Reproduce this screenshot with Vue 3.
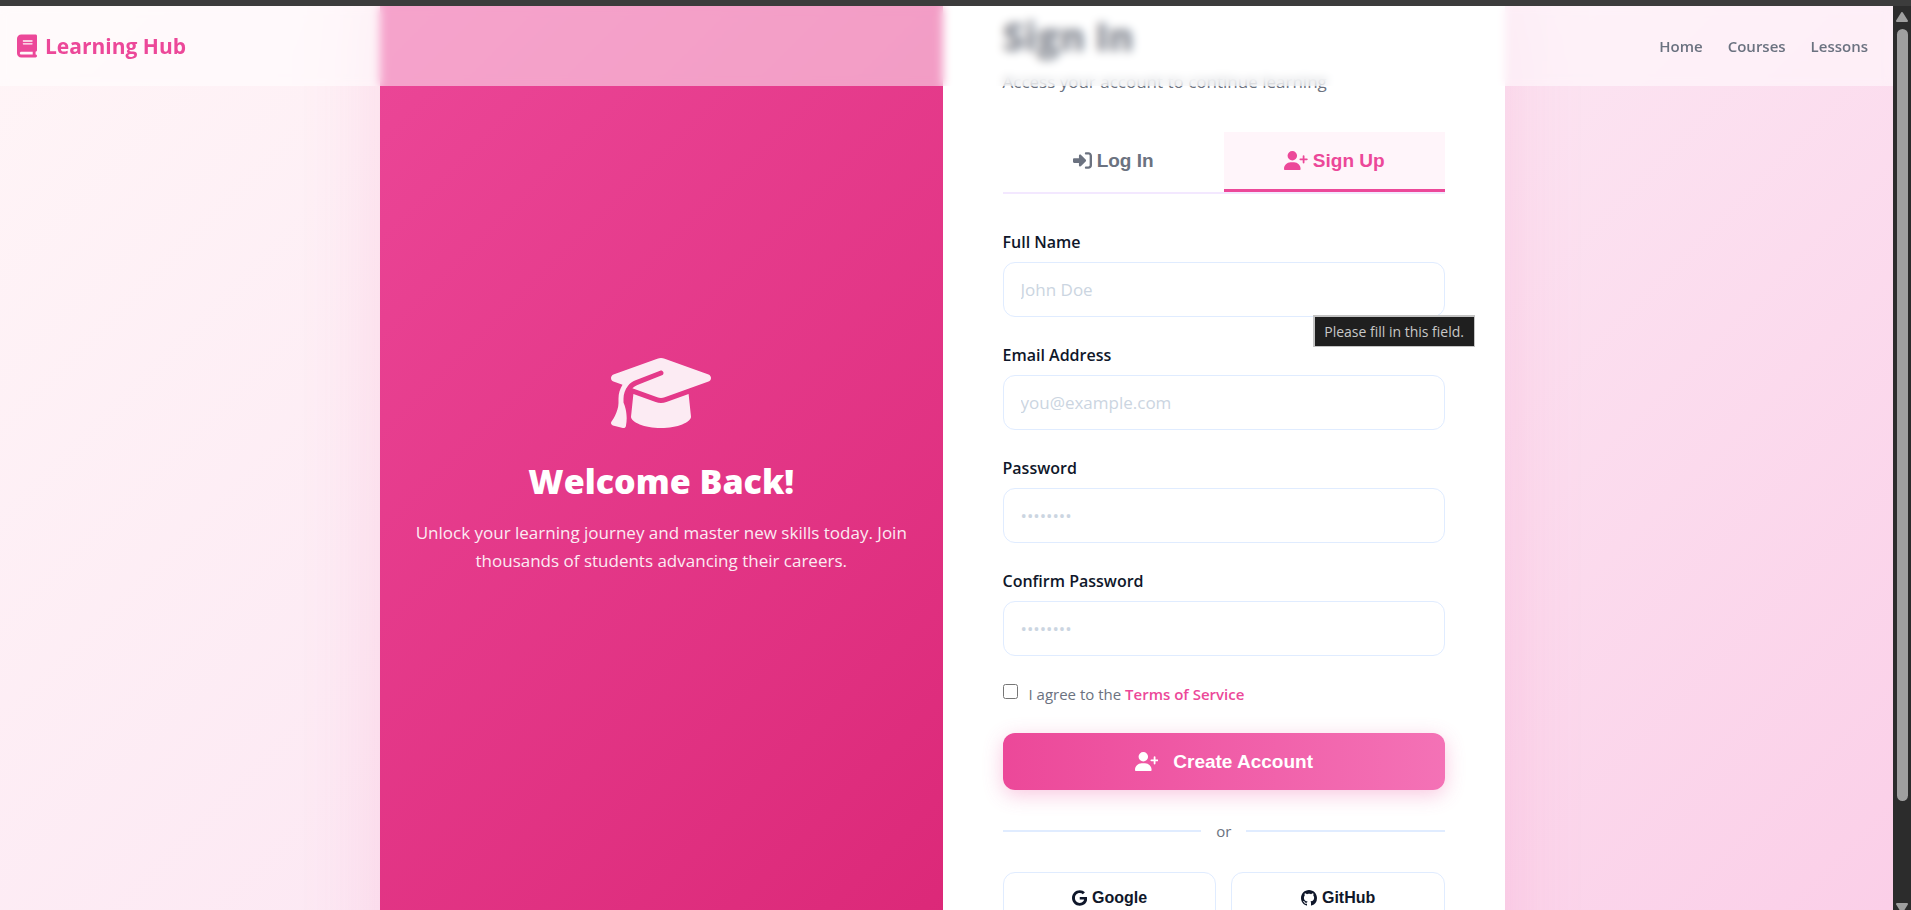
<script setup>
import { ref, reactive } from 'vue';

const activeTab = ref('signup');

const form = reactive({
  name: '',
  email: '',
  password: '',
  confirm: '',
  agree: false
});

const navLinks = ['Home', 'Courses', 'Lessons'];

const fields = [
  { key: 'name', label: 'Full Name', type: 'text', placeholder: 'John Doe' },
  { key: 'email', label: 'Email Address', type: 'email', placeholder: 'you@example.com' },
  { key: 'password', label: 'Password', type: 'password', placeholder: '••••••••' },
  { key: 'confirm', label: 'Confirm Password', type: 'password', placeholder: '••••••••' }
];

const userPlus =
  'M96 128a128 128 0 1 1 256 0A128 128 0 1 1 96 128zM0 482.3C0 383.8 79.8 304 178.3 304h91.4C368.2 304 448 383.8 448 482.3c0 16.4-13.3 29.7-29.7 29.7H29.7C13.3 512 0 498.7 0 482.3zM504 312V248H440c-13.3 0-24-10.7-24-24s10.7-24 24-24h64V136c0-13.3 10.7-24 24-24s24 10.7 24 24v64h64c13.3 0 24 10.7 24 24s-10.7 24-24 24H552v64c0 13.3-10.7 24-24 24s-24-10.7-24-24z';
</script>

<template>
  <div class="window">
    <div class="window-edge"></div>
    <div class="viewport">
      <div class="page">
        <header class="navbar">
          <a href="#" class="logo">
            <svg class="logo-icon" viewBox="0 0 448 512" fill="currentColor" aria-hidden="true">
              <path d="M96 0C43 0 0 43 0 96V416c0 53 43 96 96 96H384h32c17.7 0 32-14.3 32-32s-14.3-32-32-32V384c17.7 0 32-14.3 32-32V32c0-17.7-14.3-32-32-32H384 96zm0 384H352v64H96c-17.7 0-32-14.3-32-32s14.3-32 32-32zm32-240c0-8.8 7.2-16 16-16H336c8.8 0 16 7.2 16 16s-7.2 16-16 16H144c-8.8 0-16-7.2-16-16zm16 48H336c8.8 0 16 7.2 16 16s-7.2 16-16 16H144c-8.8 0-16-7.2-16-16s7.2-16 16-16z" />
            </svg>
            <span>Learning Hub</span>
          </a>
          <nav class="nav-links">
            <a v-for="link in navLinks" :key="link" href="#">{{ link }}</a>
          </nav>
        </header>

        <main class="auth-card">
          <section class="welcome">
            <svg class="cap-icon" viewBox="0 0 640 512" fill="currentColor" aria-hidden="true">
              <path d="M320 32c-8.1 0-16.1 1.4-23.7 4.1L15.8 137.4C6.3 140.9 0 149.9 0 160s6.3 19.1 15.8 22.6l57.9 20.9C57.3 229.3 48 259.8 48 291.9v28.1c0 28.4-10.8 57.7-22.3 80.8c-6.5 13-13.9 25.8-22.5 37.6C0 442.7-.9 448.3 .9 453.4s6 8.9 11.2 10.2l64 16c4.2 1.1 8.7 .3 12.4-2s6.3-6.1 7.1-10.4c8.6-42.8 4.3-81.2-2.1-108.7C90.3 344.3 86 329.8 80 316.5V291.9c0-30.2 10.2-58.7 27.9-81.5c12.9-15.5 29.6-28 49.2-35.7l157-61.7c8.2-3.2 17.5 .8 20.7 9s-.8 17.5-9 20.7l-157 61.7c-12.4 4.9-23.3 12.4-32.2 21.6l159.6 57.6c7.6 2.7 15.6 4.1 23.7 4.1s16.1-1.4 23.7-4.1L624.2 182.6c9.5-3.4 15.8-12.5 15.8-22.6s-6.3-19.1-15.8-22.6L343.7 36.1C336.1 33.4 328.1 32 320 32zM128 408c0 35.3 86 72 192 72s192-36.7 192-72L496.7 262.6 354.5 314c-11.1 4-22.8 6-34.5 6s-23.5-2-34.5-6L143.3 262.6 128 408z" />
            </svg>
            <h2>Welcome Back!</h2>
            <p>Unlock your learning journey and master new skills today. Join thousands of students advancing their careers.</p>
          </section>

          <section class="form-panel">
            <h1>Sign In</h1>
            <p class="subtitle">Access your account to continue learning</p>

            <div class="tabs">
              <button type="button" :class="['tab', { active: activeTab === 'login' }]" @click="activeTab = 'login'">
                <svg class="tab-icon" viewBox="0 0 512 512" fill="currentColor" aria-hidden="true">
                  <path d="M217.9 105.9L340.7 228.7c7.2 7.2 11.3 17.1 11.3 27.3s-4.1 20.1-11.3 27.3L217.9 406.1c-6.4 6.4-15 9.9-24 9.9c-18.7 0-33.9-15.2-33.9-33.9l0-62.1L32 320c-17.7 0-32-14.3-32-32l0-64c0-17.7 14.3-32 32-32l128 0 0-62.1c0-18.7 15.2-33.9 33.9-33.9c9 0 17.6 3.6 24 9.9zM352 416l64 0c17.7 0 32-14.3 32-32l0-256c0-17.7-14.3-32-32-32l-64 0c-17.7 0-32-14.3-32-32s14.3-32 32-32l64 0c53 0 96 43 96 96l0 256c0 53-43 96-96 96l-64 0c-17.7 0-32-14.3-32-32s14.3-32 32-32z" />
                </svg>
                Log In
              </button>
              <button type="button" :class="['tab', { active: activeTab === 'signup' }]" @click="activeTab = 'signup'">
                <svg class="tab-icon" viewBox="0 0 640 512" fill="currentColor" aria-hidden="true">
                  <path :d="userPlus" />
                </svg>
                Sign Up
              </button>
            </div>

            <form @submit.prevent>
              <div v-for="field in fields" :key="field.key" class="form-group">
                <label :for="field.key">{{ field.label }}</label>
                <input :id="field.key" v-model="form[field.key]" :type="field.type" :placeholder="field.placeholder" required />
                <span v-if="field.key === 'name'" class="tooltip" role="tooltip">Please fill in this field.</span>
              </div>

              <div class="terms">
                <input id="agree" v-model="form.agree" type="checkbox" />
                <label for="agree">I agree to the <a href="#">Terms of Service</a></label>
              </div>

              <button type="submit" class="submit-btn">
                <svg class="tab-icon" viewBox="0 0 640 512" fill="currentColor" aria-hidden="true">
                  <path :d="userPlus" />
                </svg>
                Create Account
              </button>
            </form>

            <div class="divider"><span>or</span></div>

            <div class="social">
              <button type="button">
                <svg viewBox="0 0 488 512" fill="currentColor" aria-hidden="true">
                  <path d="M488 261.8C488 403.3 391.1 504 248 504 110.8 504 0 393.2 0 256S110.8 8 248 8c66.8 0 123 24.5 166.3 64.9l-67.5 64.9C258.5 52.6 94.3 116.6 94.3 256c0 86.5 69.1 156.6 153.7 156.6 98.2 0 135-70.4 140.8-106.9H248v-85.3h236.1c2.3 12.7 3.9 24.9 3.9 41.4z" />
                </svg>
                Google
              </button>
              <button type="button">
                <svg viewBox="0 0 16 16" fill="currentColor" aria-hidden="true">
                  <path d="M8 0C3.58 0 0 3.58 0 8c0 3.54 2.29 6.53 5.47 7.59.4.07.55-.17.55-.38 0-.19-.01-.82-.01-1.49-2.01.37-2.53-.49-2.69-.94-.09-.23-.48-.94-.82-1.13-.28-.15-.68-.52-.01-.53.63-.01 1.08.58 1.23.82.72 1.21 1.87.87 2.33.66.07-.52.28-.87.51-1.07-1.78-.2-3.64-.89-3.64-3.95 0-.87.31-1.59.82-2.15-.08-.2-.36-1.02.08-2.12 0 0 .67-.21 2.2.82.64-.18 1.32-.27 2-.27s1.36.09 2 .27c1.53-1.04 2.2-.82 2.2-.82.44 1.1.16 1.92.08 2.12.51.56.82 1.27.82 2.15 0 3.07-1.87 3.75-3.65 3.95.29.25.54.73.54 1.48 0 1.07-.01 1.93-.01 2.2 0 .21.15.46.55.38A8.01 8.01 0 0 0 16 8c0-4.42-3.58-8-8-8z" />
                </svg>
                GitHub
              </button>
            </div>
          </section>
        </main>
      </div>

      <div class="scrollbar" aria-hidden="true">
        <svg class="arrow" viewBox="0 0 12 10"><path d="M6 1 L11 9 H1 Z" /></svg>
        <div class="track"><div class="thumb"></div></div>
        <svg class="arrow" viewBox="0 0 12 10"><path d="M6 9 L1 1 H11 Z" /></svg>
      </div>
    </div>
  </div>
</template>

<style>
body {
  margin: 0;
  overflow: hidden;
}
</style>

<style scoped>
* {
  box-sizing: border-box;
}

.window {
  display: flex;
  flex-direction: column;
  height: 100vh;
  overflow: hidden;
  background: #3c3c3c;
  font-family: "Open Sans", "Noto Sans", sans-serif;
  color: #0f172a;
}

.window-edge {
  flex: none;
  height: 6px;
}

.viewport {
  flex: 1;
  display: flex;
  min-height: 0;
}

.page {
  position: relative;
  flex: 1;
  display: flex;
  align-items: center;
  justify-content: center;
  min-width: 0;
  padding: 12px 8px 0 0;
  overflow: hidden;
  background: linear-gradient(135deg, #fff5f7 0%, #fce7f3 50%, #fbcfe8 100%);
}

.navbar {
  position: absolute;
  top: 0;
  left: 0;
  right: 0;
  z-index: 10;
  display: flex;
  align-items: center;
  justify-content: space-between;
  height: 80px;
  padding: 0 25px 0 17px;
  background: rgba(255, 255, 255, 0.5);
  backdrop-filter: blur(5px);
}

.logo {
  display: flex;
  align-items: center;
  gap: 8px;
  font-size: 21px;
  font-weight: 700;
  color: #ec4899;
  text-decoration: none;
}

.logo-icon {
  width: 20px;
  height: 24px;
}

.nav-links {
  display: flex;
  gap: 25px;
}

.nav-links a {
  font-size: 15px;
  font-weight: 600;
  color: #6b7280;
  text-decoration: none;
}

.auth-card {
  flex: none;
  display: grid;
  grid-template-columns: 1fr 1fr;
  width: 100%;
  max-width: 1125px;
  background: #fff;
  box-shadow: 0 25px 75px rgba(236, 72, 153, 0.15);
}

.welcome {
  display: flex;
  flex-direction: column;
  align-items: center;
  justify-content: center;
  padding: 30px;
  background: linear-gradient(135deg, #ec4899 0%, #db2777 100%);
  color: #fff;
  text-align: center;
}

.cap-icon {
  width: 100px;
  height: 80px;
  opacity: 0.9;
}

.welcome h2 {
  margin: 24px 0 14px;
  font-size: 34px;
  font-weight: 800;
  line-height: 48px;
}

.welcome p {
  margin: 0;
  font-size: 17px;
  line-height: 28px;
  opacity: 0.9;
}

.form-panel {
  padding: 60px;
}

h1 {
  margin: 0;
  font-size: 38px;
  font-weight: 800;
  line-height: 64px;
}

.subtitle {
  margin: 2px 0 38px;
  font-size: 17px;
  line-height: 24px;
  color: #6b7280;
}

.tabs {
  display: flex;
  margin-bottom: 36px;
  border-bottom: 2px solid #f3e8ff;
}

.tab {
  flex: 1;
  display: flex;
  align-items: center;
  justify-content: center;
  gap: 5px;
  height: 60px;
  padding: 0;
  border: none;
  border-bottom: 3px solid transparent;
  background: none;
  font-family: "Liberation Sans", Arial, sans-serif;
  font-size: 19px;
  font-weight: 600;
  color: #6b7280;
  cursor: pointer;
}

.tab.active {
  border-bottom-color: #ec4899;
  background: #fff5fa;
  color: #ec4899;
}

.tab-icon {
  height: 19px;
}

.form-group {
  position: relative;
  margin-bottom: 26px;
}

.form-group label {
  display: block;
  margin-bottom: 8px;
  font-size: 16px;
  font-weight: 600;
  line-height: 24px;
}

.form-group input {
  display: block;
  width: 100%;
  height: 55px;
  padding: 0 17px;
  border: 1px solid #e0ecff;
  border-radius: 12px;
  background: #fff;
  font-family: inherit;
  font-size: 17px;
  color: #0f172a;
  outline: none;
}

.form-group input::placeholder {
  color: #cbd5e1;
  opacity: 1;
}

.form-group input:focus {
  border-color: #ec4899;
}

.tooltip {
  position: absolute;
  top: 85px;
  right: -30px;
  padding: 0 10px 0 9px;
  border: 1px solid #c4c4c4;
  border-width: 2px 1px 1px 2px;
  background: #1f1f1f;
  font-size: 14px;
  line-height: 29px;
  color: #c8c8c8;
  white-space: nowrap;
}

.terms {
  display: flex;
  align-items: flex-start;
  gap: 11px;
  margin-bottom: 27px;
}

.terms input {
  width: 15px;
  height: 15px;
  margin: 2px 0 0;
}

.terms label {
  font-size: 15px;
  line-height: 24px;
  color: #6b7280;
}

.terms a {
  font-weight: 600;
  color: #ec4899;
  text-decoration: none;
}

.submit-btn {
  display: flex;
  align-items: center;
  justify-content: center;
  gap: 15px;
  width: 100%;
  height: 57px;
  border: none;
  border-radius: 12px;
  background: linear-gradient(90deg, #ec4899, #f472b6);
  box-shadow: 0 5px 20px rgba(236, 72, 153, 0.3);
  font-family: "Liberation Sans", Arial, sans-serif;
  font-size: 19px;
  font-weight: 700;
  color: #fff;
  cursor: pointer;
}

.divider {
  display: flex;
  align-items: center;
  gap: 15px;
  margin: 29px 0;
  font-size: 15px;
  line-height: 24px;
  color: #6b7280;
}

.divider::before,
.divider::after {
  content: "";
  flex: 1;
  height: 2px;
  background: #e0ecff;
}

.social {
  display: grid;
  grid-template-columns: 1fr 1fr;
  gap: 15px;
}

.social button {
  display: flex;
  align-items: center;
  justify-content: center;
  gap: 5px;
  height: 52px;
  border: 1px solid #e0ecff;
  border-radius: 12px;
  background: #fff;
  font-family: "Liberation Sans", Arial, sans-serif;
  font-size: 16px;
  font-weight: 600;
  color: #0f172a;
  cursor: pointer;
}

.social svg {
  height: 16px;
}

.scrollbar {
  flex: none;
  display: flex;
  flex-direction: column;
  align-items: center;
  width: 18px;
  margin-bottom: -9px;
  padding: 6px 0;
  background: #2c2c2c;
}

.arrow {
  flex: none;
  width: 12px;
  height: 10px;
  fill: #9f9f9f;
  stroke: #9f9f9f;
  stroke-width: 2;
  stroke-linejoin: round;
}

.track {
  flex: 1;
  width: 11px;
  padding: 7px 0;
}

.thumb {
  height: 89%;
  border-radius: 6px;
  background: #9f9f9f;
}
</style>
